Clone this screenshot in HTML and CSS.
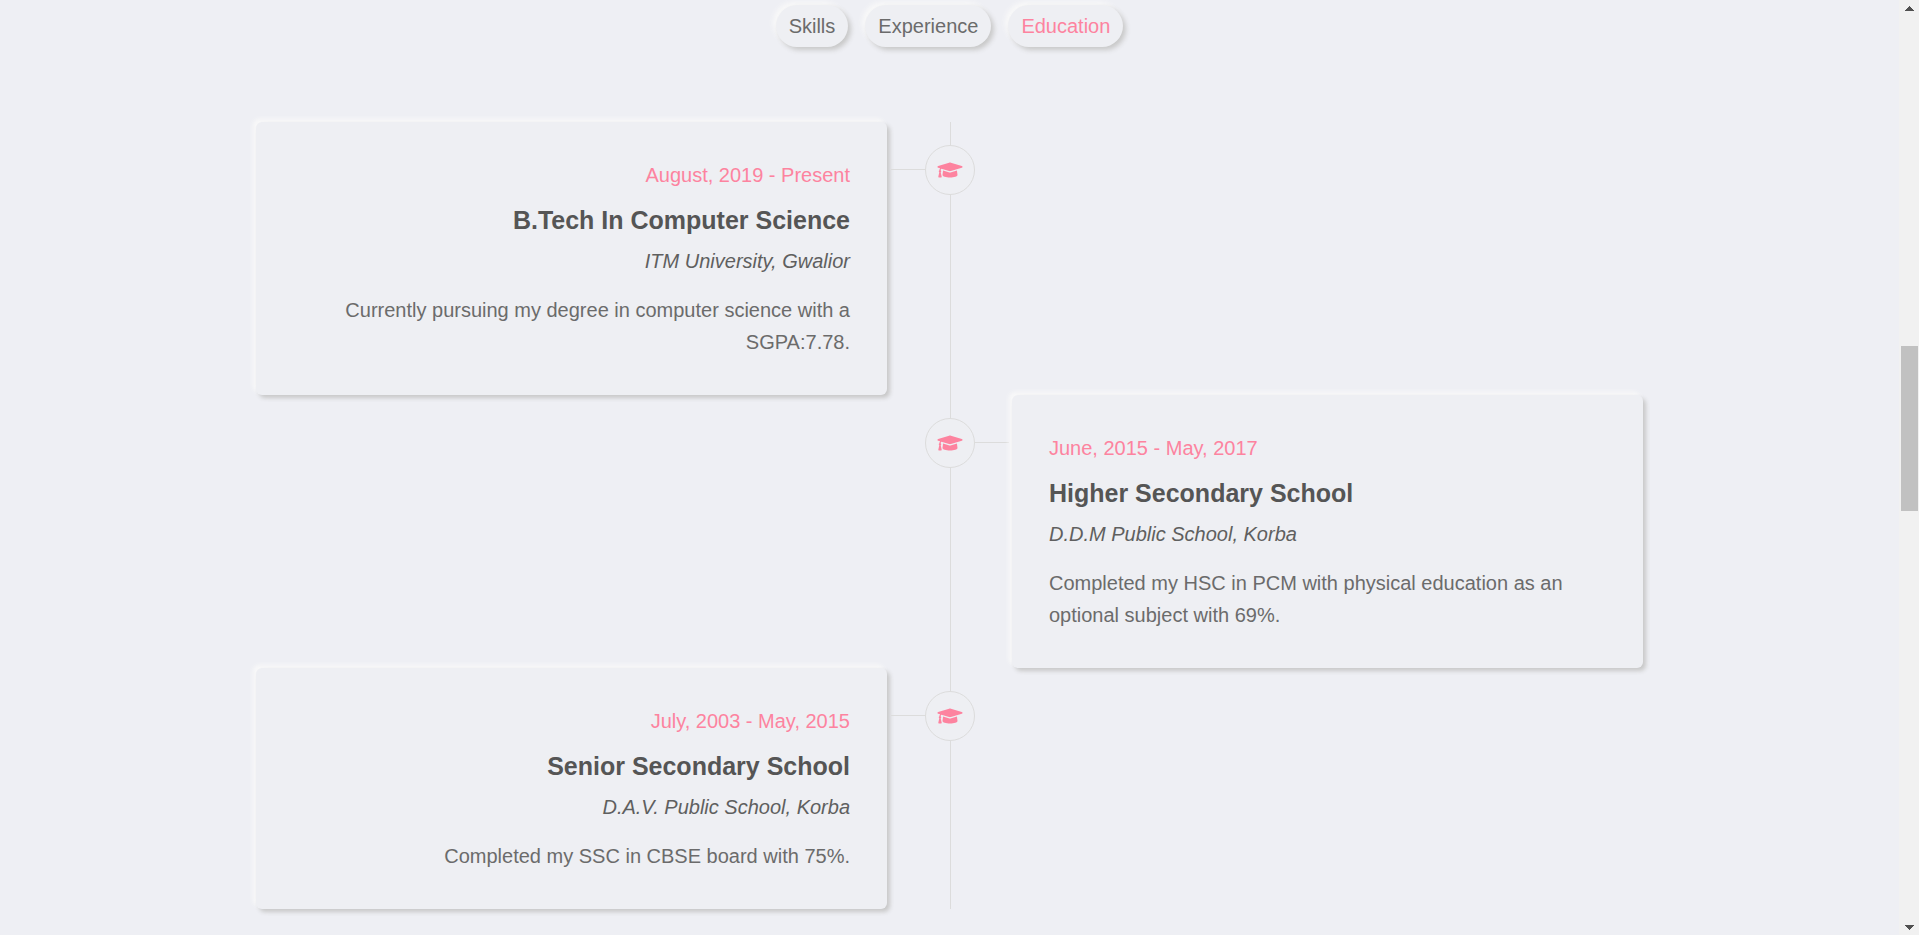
FILE: index.html
```html
<!DOCTYPE html>
<html lang="en">
<head>
<meta charset="utf-8">
<title>Resume</title>
<link rel="stylesheet" href="styles.css">
</head>
<body>
<svg class="defs" aria-hidden="true">
  <symbol id="cap" viewBox="0 0 640 512">
    <path d="M622.34 153.2L343.4 67.5c-15.2-4.67-31.6-4.67-46.79 0L17.66 153.2c-23.54 7.23-23.54 38.36 0 45.59l48.63 14.94c-10.67 13.19-17.23 29.28-17.88 46.9C38.78 266.15 32 276.11 32 288c0 10.78 5.68 19.85 13.86 25.65L20.33 428.53C18.11 438.52 25.71 448 35.94 448h56.11c10.24 0 17.84-9.48 15.62-19.47L82.14 313.65C90.32 307.85 96 298.78 96 288c0-11.57-6.47-21.25-15.66-26.87.76-15.02 8.44-28.3 20.69-36.72L296.6 284.5c9.06 2.78 26.44 6.25 46.79 0l278.95-85.7c23.55-7.24 23.55-38.36 0-45.6zM352.79 315.09c-28.53 8.76-52.84 3.92-65.59 0l-145.02-44.55L128 384c0 35.35 85.96 64 192 64s192-28.65 192-64l-14.18-113.47-145.03 44.56z"/>
  </symbol>
</svg>
<div class="viewport">
  <main class="page">
    <nav class="tabs" aria-label="Resume sections">
      <button class="tab" type="button">Skills</button>
      <button class="tab" type="button">Experience</button>
      <button class="tab tab-active" type="button">Education</button>
    </nav>
    <section class="timeline">
      <article class="row row-left">
        <div class="card">
          <p class="date">August, 2019 - Present</p>
          <h2 class="title">B.Tech In Computer Science</h2>
          <p class="place">ITM University, Gwalior</p>
          <p class="text">Currently pursuing my degree in computer science with a SGPA:7.78.</p>
        </div>
        <div class="axis"><span class="marker"><svg class="cap"><use href="#cap"/></svg></span></div>
      </article>
      <article class="row row-right">
        <div class="axis"><span class="marker"><svg class="cap"><use href="#cap"/></svg></span></div>
        <div class="card">
          <p class="date">June, 2015 - May, 2017</p>
          <h2 class="title">Higher Secondary School</h2>
          <p class="place">D.D.M Public School, Korba</p>
          <p class="text">Completed my HSC in PCM with physical education as an optional subject with 69%.</p>
        </div>
      </article>
      <article class="row row-left">
        <div class="card">
          <p class="date">July, 2003 - May, 2015</p>
          <h2 class="title">Senior Secondary School</h2>
          <p class="place">D.A.V. Public School, Korba</p>
          <p class="text">Completed my SSC in CBSE board with 75%.</p>
        </div>
        <div class="axis"><span class="marker"><svg class="cap"><use href="#cap"/></svg></span></div>
      </article>
    </section>
  </main>
  <div class="scrollbar" aria-hidden="true">
    <svg class="arrow" viewBox="0 0 9 5" shape-rendering="crispEdges"><path d="M4 0h1v1h1v1h1v1h1v1h1v1H0V4h1V3h1V2h1V1h1z"/></svg>
    <div class="track"><div class="thumb"></div></div>
    <svg class="arrow" viewBox="0 0 9 5" shape-rendering="crispEdges"><path d="M0 0h9v1H8v1H7v1H6v1H5v1H4V4H3V3H2V2H1V1H0z"/></svg>
  </div>
</div>
</body>
</html>
```
FILE: styles.css
```css
* { box-sizing: border-box; }
body {
  margin: 0;
  background: #eeeff4;
  color: #6b6b6b;
  font: 20px/32px "Liberation Sans", Arial, sans-serif;
}
p, h2 { margin: 0; }
.defs { position: absolute; width: 0; height: 0; }
.viewport { display: flex; height: 100vh; overflow: hidden; }
.page { flex: 1; padding: 5px 24px 24px; }

.tabs { display: flex; justify-content: center; gap: 17px; }
.tab {
  border: 0;
  border-radius: 21px;
  padding: 5px 13px;
  background: #eeeff3;
  color: inherit;
  font: inherit;
  box-shadow: 3px 3px 5px #c8c8c8, -3px -3px 5px #f9f9f9;
}
.tab-active { color: #fd839f; }

.timeline { max-width: 1387px; margin: 75px auto 0; }
.row { display: grid; grid-template-columns: 1fr 125px 1fr; }
.row-left { text-align: right; }
.row-right .axis { grid-column: 2; }
.card {
  padding: 37px;
  border-radius: 6px;
  background: #eeeff3;
  box-shadow: 3px 3px 4px #c8c8c8, -3px -3px 4px #f9f9f9;
}
.date { color: #fd839f; }
.title {
  padding: 9px 0 5px;
  color: #555;
  font-size: 25px;
  line-height: 40px;
}
.place { color: #5f5f5f; font-style: italic; }
.text { margin-top: 17px; }

.axis {
  display: flex;
  align-items: flex-start;
  justify-content: center;
  padding-top: 23px;
  background:
    linear-gradient(#dcdcdc, #dcdcdc) 63px 0 / 1px 100% no-repeat,
    linear-gradient(#dcdcdc, #dcdcdc) 4px 47px / 58px 1px no-repeat;
}
.row-right .axis {
  background:
    linear-gradient(#dcdcdc, #dcdcdc) 63px 0 / 1px 100% no-repeat,
    linear-gradient(#dcdcdc, #dcdcdc) 62px 47px / 60px 1px no-repeat;
}
.marker {
  display: grid;
  place-items: center;
  width: 50px;
  height: 50px;
  border: 1px solid #dcdcdc;
  border-radius: 50%;
  background: #eeeff3;
}
.cap { width: 26px; height: 20px; fill: #fd839f; }

.scrollbar {
  display: flex;
  flex-direction: column;
  align-items: center;
  width: 20px;
  padding: 6px 1px 5px 2px;
  background: #f1f1f1;
}
.arrow { width: 9px; height: 5px; fill: #505050; }
.track { flex: 1; align-self: stretch; padding-top: 335px; }
.thumb { height: 165px; background: #c1c1c1; }
```
